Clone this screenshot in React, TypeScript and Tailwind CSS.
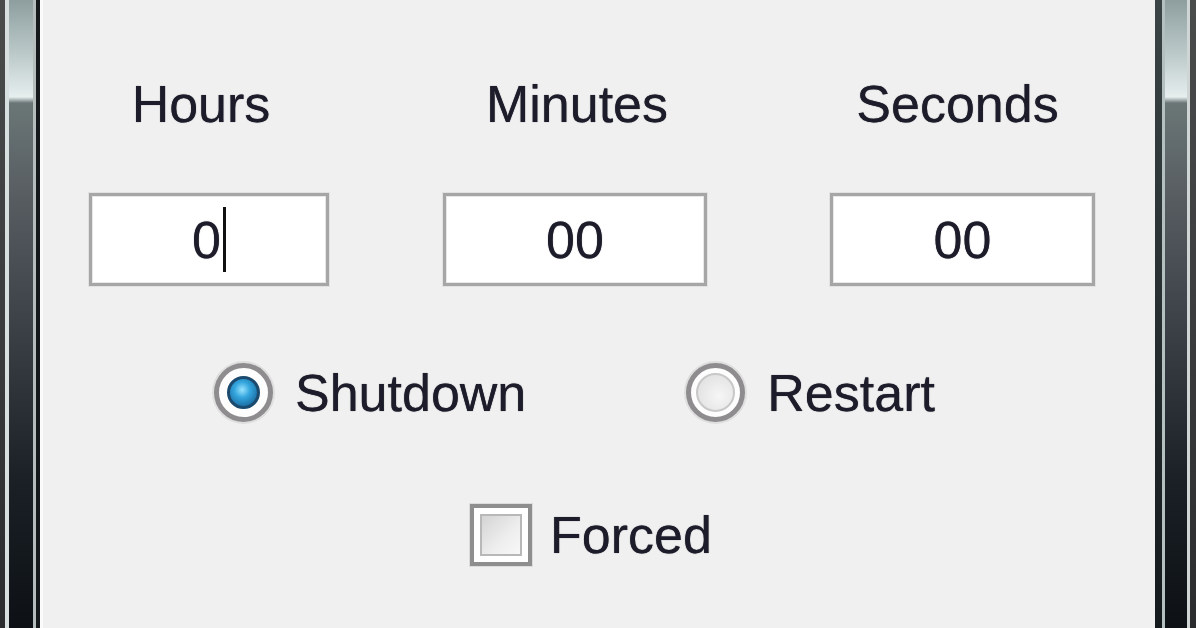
import React from 'react';

const font = { fontFamily: '"Liberation Sans", Arial, sans-serif' };

const ink = 'text-[#1c1c2a] [text-shadow:0_0_0.8px_#1c1c2a]';

const glass =
  'bg-[linear-gradient(to_bottom,#8e9e9e_0px,#b8c6c6_50px,#e6eeee_97px,#6a7676_103px,#575c61_200px,#3a4046_330px,#1a2026_480px,#0d1115_628px)]';

function LeftFrame() {
  return (
    <div className="flex h-full shrink-0">
      <div className="w-[5px] bg-[linear-gradient(to_bottom,#4a4c4c,#2a2c2e)]" />
      <div className="w-[4px] bg-[#d9dede]" />
      <div className={`w-[24px] ${glass}`} />
      <div className="w-[3px] bg-[#b4bcbc]" />
      <div className="w-[4px] bg-[#15191c]" />
      <div className="w-[3px] bg-[#fbfbfb]" />
    </div>
  );
}

function RightFrame() {
  return (
    <div className="flex h-full shrink-0">
      <div className="w-[7px] bg-[linear-gradient(to_bottom,#3a4444,#14191c)]" />
      <div className="w-[3px] bg-[#b4c0c0]" />
      <div className={`w-[22px] ${glass}`} />
      <div className="w-[3px] bg-[#cfd4d4]" />
      <div className="w-[6px] bg-[linear-gradient(to_bottom,#4a4c4c,#2a2c2e)]" />
    </div>
  );
}

function TimeBox({ value, width, cursor }: { value: string; width: string; cursor?: boolean }) {
  return (
    <div
      className={`${width} h-[93px] border-[3px] border-[#a6a6a6] bg-white shadow-[inset_0_0_0_1px_#e8e8e8,0_0_0_1px_#e2e2e2] flex items-center justify-center`}
    >
      <span className={`text-[52px] leading-none ${ink}`}>{value}</span>
      {cursor && <span className="ml-[2px] w-[3px] h-[65px] bg-[#111]" />}
    </div>
  );
}

function Radio({ checked, label }: { checked: boolean; label: string }) {
  return (
    <div className="flex items-center">
      <div className="w-[59px] h-[59px] rounded-full border-[5px] border-[#8e8c8e] bg-[#fdfdfd] shadow-[0_0_0_2px_#dedede] flex items-center justify-center">
        {checked ? (
          <div className="w-[33px] h-[33px] rounded-full border-[3px] border-[#1b4a6e] bg-[radial-gradient(circle_at_45%_40%,#9ae4ff_0%,#35a6de_35%,#1a6aa0_80%)]" />
        ) : (
          <div className="w-[39px] h-[39px] rounded-full border-[2px] border-[#c8c8c8] bg-[radial-gradient(circle_at_60%_60%,#f6f6f6_0%,#e4e4e4_70%,#d6d6d6_100%)]" />
        )}
      </div>
      <span className={`ml-[22px] text-[52px] leading-none ${ink}`}>{label}</span>
    </div>
  );
}

export default function App() {
  return (
    <div className="w-[1196px] h-[628px] flex overflow-hidden bg-[#f0f0f0]" style={font}>
      <LeftFrame />
      <div className="flex-1 flex flex-col bg-[#f0f0f0]">
        {/* labels */}
        <div className={`mt-[78px] flex text-[52px] leading-none h-[52px] ${ink}`}>
          <div className="ml-[46px] w-[240px] text-center pr-[16px]">Hours</div>
          <div className="ml-[114px] w-[264px] text-center pl-[4px]">Minutes</div>
          <div className="ml-[123px] w-[265px] text-center pr-[10px]">Seconds</div>
        </div>

        {/* inputs */}
        <div className="mt-[63px] flex">
          <div className="ml-[46px]">
            <TimeBox value="0" width="w-[240px]" cursor />
          </div>
          <div className="ml-[114px]">
            <TimeBox value="00" width="w-[264px]" />
          </div>
          <div className="ml-[123px]">
            <TimeBox value="00" width="w-[265px]" />
          </div>
        </div>

        {/* mode */}
        <div className="mt-[77px] flex items-center ml-[171px]">
          <Radio checked label="Shutdown" />
          <div className="ml-[160px]">
            <Radio checked={false} label="Restart" />
          </div>
        </div>

        {/* forced */}
        <div className="mt-[82px] flex items-center ml-[427px]">
          <div className="w-[62px] h-[62px] border-[4px] border-[#8e8e8e] bg-white shadow-[0_0_0_1px_#dcdcdc] flex items-center justify-center">
            <div className="w-[42px] h-[42px] border-[2px] border-[#b8b8b8] bg-[linear-gradient(135deg,#d4d4d4,#eeeeee_60%,#f8f8f8)]" />
          </div>
          <span className={`ml-[18px] text-[52px] leading-none ${ink}`}>Forced</span>
        </div>
      </div>
      <RightFrame />
    </div>
  );
}
